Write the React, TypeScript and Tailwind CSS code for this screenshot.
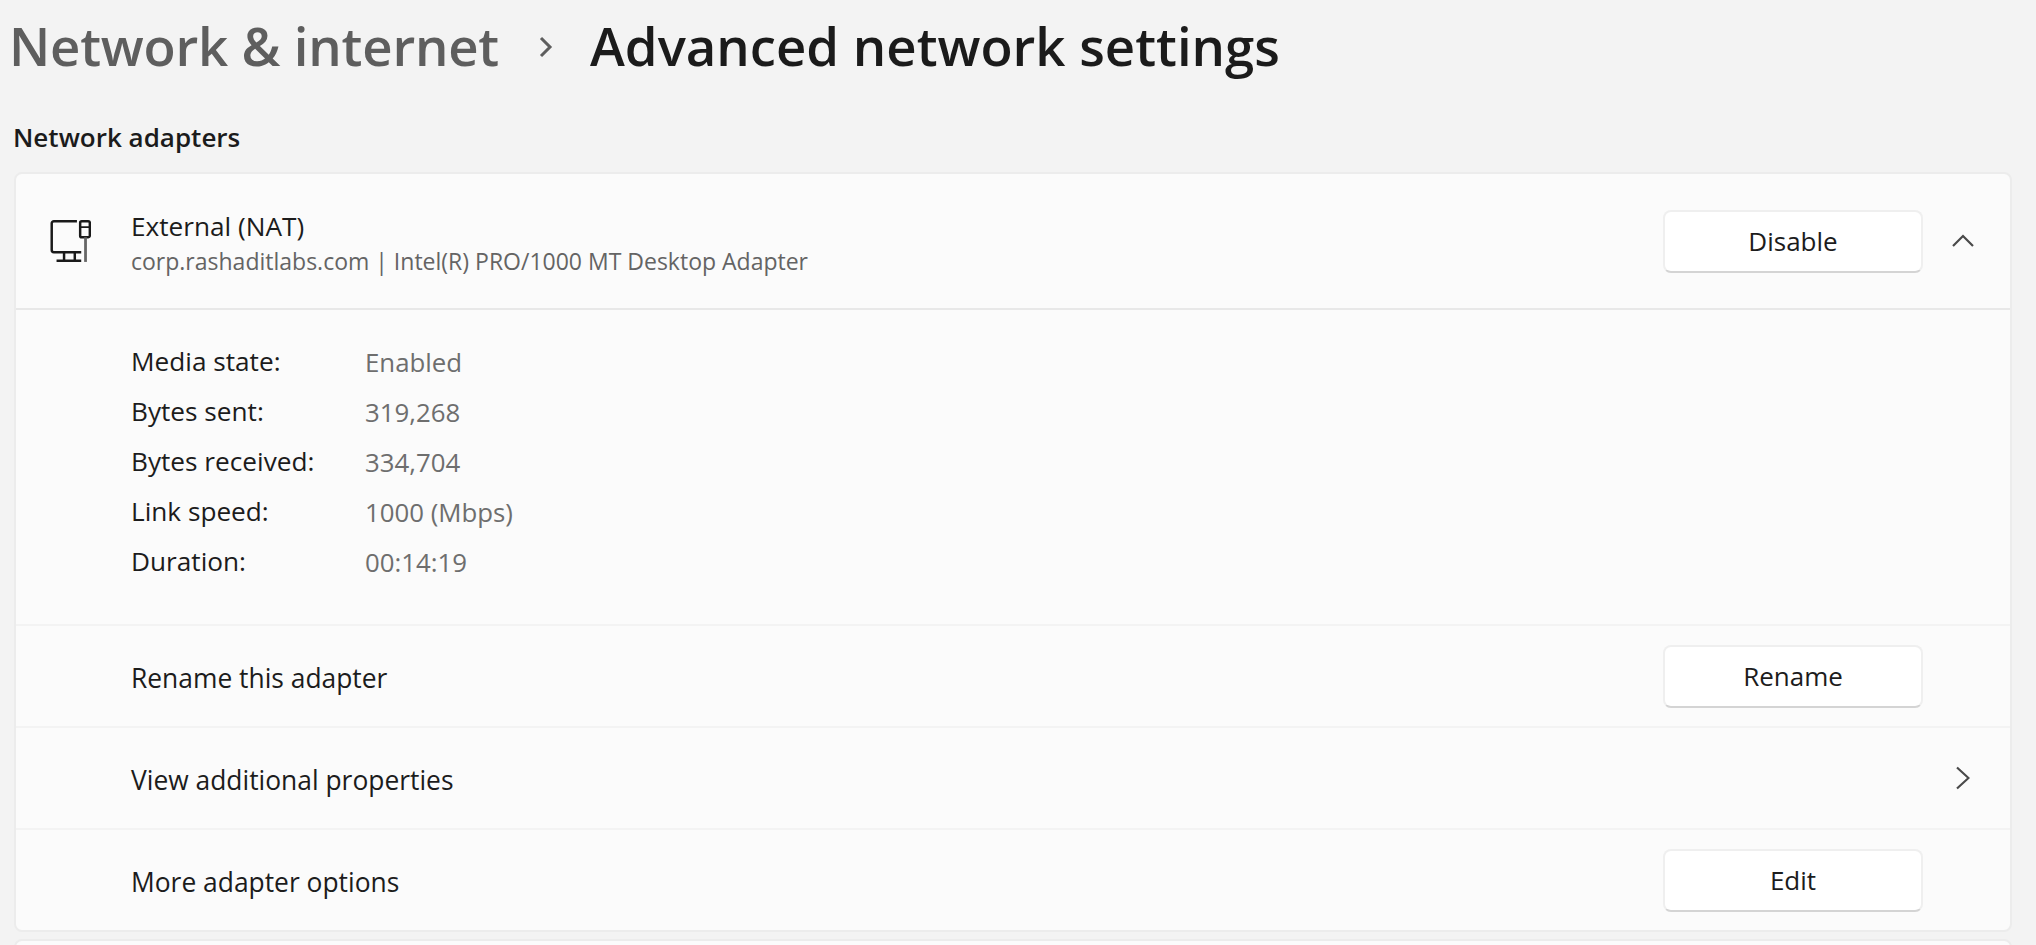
const font = { fontFamily: '"Open Sans", "Noto Sans", sans-serif' };

function Btn({ label }: { label: string }) {
  return (
    <button className="w-[260px] h-[63px] shrink-0 bg-white rounded-[8px] border-2 border-[#efefef] border-b-[#d4d4d4] text-[26px] text-[#1c1c1c] flex items-center justify-center">
      {label}
    </button>
  );
}

function Stat({ k, v }: { k: string; v: string }) {
  return (
    <div className="flex h-[50px] items-center text-[26.2px]">
      <span className="w-[234px] text-[#1c1c1c]">{k}</span>
      <span className="text-[25.8px] text-[#6e6e6e]">{v}</span>
    </div>
  );
}

function AdapterIcon() {
  return (
    <svg className="shrink-0" width="41" height="44" viewBox="0 0 38 41" fill="none" stroke="#1a1a1a" strokeWidth="2.3">
      <path d="M25 2H3.5a2 2 0 0 0-2 2v25a2 2 0 0 0 2 2H29" />
      <path d="M6 39h23M13 31v8M23 31v8" />
      <rect x="28" y="2" width="9" height="15" rx="1.5" />
      <path d="M28 7.5h9" strokeWidth="1.6" />
      <path d="M33 17v23" stroke="#666" strokeWidth="2.6" />
    </svg>
  );
}

function Row({ label, right, children }: { label: string; right: string; children: React.ReactNode }) {
  return (
    <div className={`h-[102px] border-t-2 border-[#f3f3f3] flex items-center pl-[115px] text-[26.4px] text-[#1c1c1c] ${right}`}>
      <span className="flex-1 pt-[6px]">{label}</span>
      {children}
    </div>
  );
}

export default function App() {
  return (
    <div className="w-[2036px] h-[945px] overflow-hidden bg-[#f3f3f3]" style={font}>
      <div className="flex items-center h-[94px] pl-[9px] text-[52.7px] font-semibold pb-[2px]">
        <span className="text-[#5e5e5e] tracking-[-0.2px]">Network &amp; internet</span>
        <svg className="ml-[37px] mr-[34px] mt-[2px]" width="20" height="24" viewBox="0 0 20 24" fill="none" stroke="#5e5e5e" strokeWidth="3"><path d="M5 3l9 9-9 9" /></svg>
        <span className="text-[#1b1b1b]">Advanced network settings</span>
      </div>
      <div className="pl-[13px] h-[78px] pt-[25px] text-[26px] font-semibold text-[#1b1b1b] leading-[36px]">Network adapters</div>
      <div className="ml-[14px] mr-[24px] h-[760px] bg-[#fbfbfb] border-2 border-[#ececec] rounded-[8px] overflow-hidden">
        <div className="h-[136px] border-b-2 border-[#e8e8e8] flex items-center pl-[34px] pr-[35px]">
          <AdapterIcon />
          <div className="ml-[40px] flex-1 pt-[6px]">
            <div className="text-[26.2px] leading-[35px] text-[#1c1c1c]">External (NAT)</div>
            <div className="text-[23px] leading-[35px] text-[#646464]">corp.rashaditlabs.com | Intel(R) PRO/1000 MT Desktop Adapter</div>
          </div>
          <Btn label="Disable" />
          <svg className="ml-[28px]" width="24" height="16" viewBox="0 0 24 16" fill="none" stroke="#4a4a4a" strokeWidth="2.2"><path d="M2 13L12 3l10 10" /></svg>
        </div>
        <div className="h-[314px] pt-[27px] pl-[115px]">
          <Stat k="Media state:" v="Enabled" />
          <Stat k="Bytes sent:" v="319,268" />
          <Stat k="Bytes received:" v="334,704" />
          <Stat k="Link speed:" v="1000 (Mbps)" />
          <Stat k="Duration:" v="00:14:19" />
        </div>
        <Row label="Rename this adapter" right="pr-[87px]"><Btn label="Rename" /></Row>
        <Row label="View additional properties" right="pr-[40px]">
          <svg width="16" height="26" viewBox="0 0 16 26" fill="none" stroke="#4a4a4a" strokeWidth="2.2"><path d="M3 2.5L14.5 13 3 23.5" /></svg>
        </Row>
        <Row label="More adapter options" right="pr-[87px]"><Btn label="Edit" /></Row>
      </div>
      <div className="ml-[14px] mr-[24px] mt-[7px] h-[40px] bg-[#fbfbfb] border-2 border-[#ececec] rounded-t-[8px]" />
    </div>
  );
}
